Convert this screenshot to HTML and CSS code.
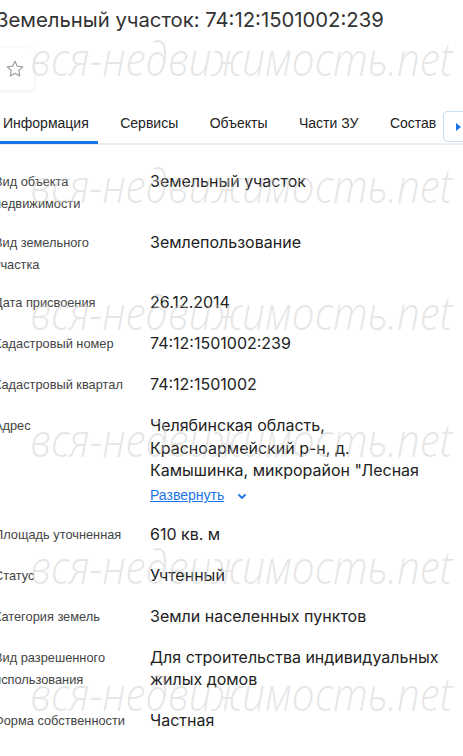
FILE: index.html
```html
<!DOCTYPE html>
<html lang="ru">
<head>
    <meta charset="UTF-8" />
    <meta name="viewport" content="width=device-width, initial-scale=1.0">
    <title>Земельный участок: 74:12:1501002:239</title>
    <link rel="stylesheet" href="styles.css">
</head>

<body>
    <div class="page">
        <h1 class="title">Земельный участок: 74:12:1501002:239</h1>

        <button class="fav-btn" aria-label="В избранное">
            <svg width="20" height="20" viewBox="0 0 24 24">
                <path d="M12 2.8l2.8 5.9 6.5.8-4.8 4.5 1.2 6.4L12 17.2l-5.7 3.2 1.2-6.4-4.8-4.5 6.5-.8z" fill="none" stroke="#9b9b9b" stroke-width="1.4" stroke-linejoin="round" />
            </svg>
        </button>

        <nav class="tabs">
            <a class="tab active">Информация</a>
            <a class="tab">Сервисы</a>
            <a class="tab">Объекты</a>
            <a class="tab">Части ЗУ</a>
            <a class="tab">Состав</a>
            <button class="tabs-next" aria-label="Дальше">
                <svg width="6" height="8" viewBox="0 0 6 8"><path d="M0 0L5 4L0 8z" fill="#1a73e8" /></svg>
            </button>
        </nav>

        <div class="props">
            <div class="prop">
                <div class="prop-label">Вид объекта недвижимости</div>
                <div class="prop-value">Земельный участок</div>
            </div>
            <div class="prop">
                <div class="prop-label">Вид земельного участка</div>
                <div class="prop-value">Землепользование</div>
            </div>
            <div class="prop">
                <div class="prop-label">Дата присвоения</div>
                <div class="prop-value">26.12.2014</div>
            </div>
            <div class="prop">
                <div class="prop-label">Кадастровый номер</div>
                <div class="prop-value">74:12:1501002:239</div>
            </div>
            <div class="prop">
                <div class="prop-label">Кадастровый квартал</div>
                <div class="prop-value">74:12:1501002</div>
            </div>
            <div class="prop">
                <div class="prop-label">Адрес</div>
                <div class="prop-value">
                    Челябинская область,<br>
                    Красноармейский р-н, д.<br>
                    Камышинка, микрорайон "Лесная
                    <a class="expand-link">Развернуть
                        <svg width="12" height="12" viewBox="0 0 12 12"><path d="M2.5 4.5L6 8l3.5-3.5" fill="none" stroke="#1a73e8" stroke-width="1.8" /></svg>
                    </a>
                </div>
            </div>
            <div class="prop">
                <div class="prop-label">Площадь уточненная</div>
                <div class="prop-value">610 кв. м</div>
            </div>
            <div class="prop">
                <div class="prop-label">Статус</div>
                <div class="prop-value">Учтенный</div>
            </div>
            <div class="prop">
                <div class="prop-label">Категория земель</div>
                <div class="prop-value">Земли населенных пунктов</div>
            </div>
            <div class="prop">
                <div class="prop-label">Вид разрешенного использования</div>
                <div class="prop-value">Для строительства индивидуальных жилых домов</div>
            </div>
            <div class="prop">
                <div class="prop-label">Форма собственности</div>
                <div class="prop-value">Частная</div>
            </div>
        </div>
    </div>

    <div class="watermark">
        <span>вся-недвижимость.net</span>
        <span>вся-недвижимость.net</span>
        <span>вся-недвижимость.net</span>
        <span>вся-недвижимость.net</span>
        <span>вся-недвижимость.net</span>
        <span>вся-недвижимость.net</span>
    </div>
</body>
</html>
```

FILE: styles.css
```css
* {
    margin: 0;
    padding: 0;
    box-sizing: border-box;
}

body {
    font-family: "Liberation Sans", Arial, sans-serif;
    background: #fff;
    color: #222;
    position: relative;
    overflow: hidden;
    height: 756px;
}

.page {
    margin-left: -6px;
    padding-top: 6px;
}

.title {
    font-family: Inter, "Liberation Sans", sans-serif;
    font-size: 20.3px;
    font-weight: normal;
    line-height: 28px;
    color: #333;
    padding-left: 2px;
    white-space: nowrap;
}

.fav-btn {
    display: flex;
    align-items: center;
    justify-content: center;
    width: 40px;
    height: 42px;
    margin-top: 14px;
    padding-left: 2px;
    border: none;
    border-radius: 4px;
    background: #fff;
    box-shadow: 0 1px 4px rgba(0, 0, 0, 0.08);
    cursor: pointer;
}

.tabs {
    position: relative;
    display: flex;
    gap: 13.5px;
    margin-top: 14px;
    height: 41px;
    border-bottom: 2px solid #eeeeee;
    white-space: nowrap;
}

.tab {
    display: block;
    padding: 0 9px;
    font-size: 14px;
    line-height: 39px;
    color: #222;
    cursor: pointer;
}

.tab.active {
    box-shadow: inset 0 -3px 0 #1a73e8;
    margin-bottom: -1px;
}

.tabs-next {
    position: absolute;
    top: 7px;
    left: 449px;
    width: 32px;
    height: 31px;
    display: flex;
    align-items: center;
    padding-left: 12px;
    background: #fff;
    border: 1px solid #cadcf6;
    border-radius: 4px;
}

.props {
    margin-top: 24px;
}

.prop {
    display: grid;
    grid-template-columns: 156px 300px;
    margin-bottom: 16.5px;
}

.prop-label {
    width: 138px;
    padding-top: 2px;
    margin-bottom: -2px;
    font-size: 12.8px;
    line-height: 22px;
    color: #444;
}

.prop-value {
    font-family: Inter, "Liberation Sans", sans-serif;
    font-size: 16px;
    line-height: 22.5px;
    padding: 1px 0;
    color: #222;
}

.expand-link {
    display: flex;
    align-items: center;
    gap: 12px;
    margin-top: 4.75px;
    font-family: "Liberation Sans", Arial, sans-serif;
    font-size: 14px;
    line-height: 18px;
    color: #1a73e8;
    text-decoration: underline;
    cursor: pointer;
}

.expand-link svg {
    margin-top: 1px;
}

.watermark {
    position: absolute;
    top: -5px;
    left: 30px;
    display: flex;
    flex-direction: column;
    pointer-events: none;
}

.watermark span {
    display: block;
    font-family: "Open Sans", sans-serif;
    font-style: italic;
    font-weight: 300;
    font-size: 46px;
    line-height: 127px;
    color: rgba(200, 200, 200, 0.45);
    transform: scaleX(0.88);
    transform-origin: left center;
    white-space: nowrap;
}
```
